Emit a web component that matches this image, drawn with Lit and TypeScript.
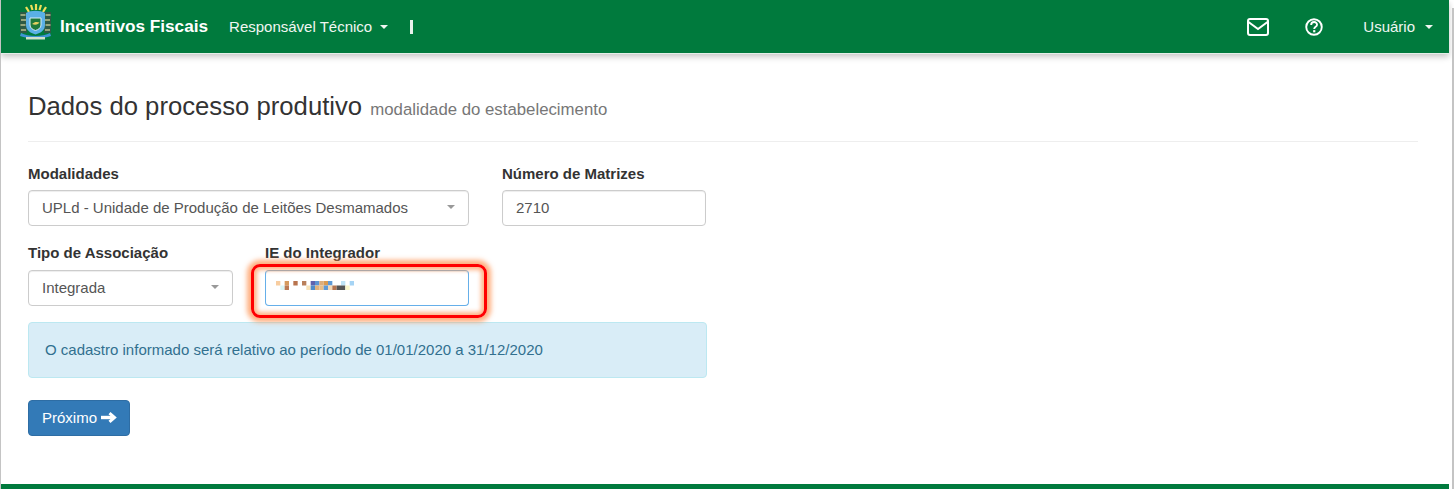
import { LitElement, html, css, svg } from "lit";
import { customElement } from "lit/decorators.js";

const mosaic: [number, number, string][] = [
  [0, 0, "#f8cda0"], [2, 0, "#d69a5e"], [4, 0, "#b9744e"], [6, 0, "#b97f5a"], [8, 0, "#5f62ad"],
  [9, 0, "#5c93d2"], [10, 0, "#dcae7c"], [11, 0, "#d99a52"], [12, 0, "#5e9ad6"], [15, 0, "#bfe3f5"],
  [17, 0, "#a6d4f5"], [1, 1, "#d9f5f5"], [2, 1, "#bb7a55"], [7, 1, "#f8e2b8"], [8, 1, "#4f8cc9"],
  [9, 1, "#e0b27c"], [10, 1, "#e8bd88"], [11, 1, "#5e9ad6"], [12, 1, "#f5d8b5"], [13, 1, "#b4744f"],
  [14, 1, "#555555"], [15, 1, "#555555"], [16, 1, "#f8f5c8"],
];

@customElement("app-root")
export class AppRoot extends LitElement {
  static styles = css`
    :host {
      display: block;
      height: 489px;
      width: 1454px;
      box-sizing: border-box;
      position: relative;
      overflow: hidden;
      background: #fff;
      font-family: "Liberation Sans", Arial, sans-serif;
      font-size: 15px;
      color: #333;
      border-left: 1px solid #c4c4c4;
    }
    .strip {
      position: absolute;
      right: 0;
      top: 8px;
      bottom: 0;
      width: 2px;
      background: #c4c4c4;
    }
    .page {
      width: 1448px;
      height: 489px;
      display: flex;
      flex-direction: column;
    }
    nav {
      height: 53px;
      flex: none;
      background: #007a3d;
      border-bottom: 1px solid #e4eee8;
      box-shadow: 0 3px 6px rgba(0, 0, 0, 0.22);
      display: flex;
      align-items: center;
      color: #fff;
      box-sizing: content-box;
    }
    .logo {
      margin-left: 17px;
      margin-bottom: 10px;
      width: 35px;
      height: 37px;
      flex: none;
    }
    .brand {
      margin-left: 7px;
      font-size: 17.2px;
      font-weight: 700;
    }
    .menu {
      margin-left: 21px;
      font-size: 15px;
      display: flex;
      align-items: center;
      color: #f0f6f2;
    }
    .caret {
      display: inline-block;
      width: 0;
      height: 0;
      border-left: 4px solid transparent;
      border-right: 4px solid transparent;
      border-top: 4px solid currentColor;
      margin-left: 8px;
    }
    .bar {
      margin-left: 22px;
      width: 3px;
      height: 14px;
      background: #e8f2ec;
    }
    .spacer { flex: 1; }
    .icon { flex: none; display: block; }
    .mail { margin-right: 36px; }
    .help { margin-right: 40px; }
    .menu.user { margin-left: 0; margin-right: 16px; }
    .menu.user .caret { margin-left: 10px; }
    main {
      flex: 1;
      padding: 36px 31px 0 27px;
      display: flex;
      flex-direction: column;
    }
    h1 {
      margin: 0;
      font-size: 25.7px;
      font-weight: 400;
      line-height: 32px;
      padding-bottom: 15px;
      border-bottom: 1px solid #eee;
      color: #333;
    }
    h1 small {
      font-size: 16.8px;
      color: #777;
      margin-left: 1px;
    }
    .row { display: flex; gap: 32px; }
    .row.first { margin-top: 22px; gap: 33px; }
    .row.second { margin-top: 17px; }
    .row.second label { margin-bottom: 7px; }
    .field { display: flex; flex-direction: column; }
    label {
      font-weight: 700;
      line-height: 20px;
      margin-bottom: 6px;
      color: #333;
    }
    .w441 { width: 441px; }
    .w204 { width: 204px; }
    .w205 { width: 205px; }
    .ctl {
      height: 36px;
      box-sizing: border-box;
      border: 1px solid #ccc;
      border-radius: 4px;
      padding: 0 13px 2px;
      display: flex;
      align-items: center;
      justify-content: space-between;
      color: #555;
      background: #fff;
      box-shadow: inset 0 1px 1px rgba(0, 0, 0, 0.075);
    }
    .ctl .caret { color: #999; margin: 0; }
    .ctl.focus {
      border-color: #66afe9;
      border-top-color: #8fb0c8;
      justify-content: flex-start;
      padding-left: 10px;
      position: relative;
    }
    .mosaic { margin-top: -4px; display: block; }
    .highlight {
      position: absolute;
      left: -15px;
      top: -7px;
      width: 236px;
      height: 54px;
      box-sizing: border-box;
      border: 3px solid #f00;
      border-radius: 9px;
      box-shadow: 0 0 5px 4px rgba(255, 140, 70, 0.7), inset 0 0 4px 3px rgba(255, 140, 70, 0.65);
      pointer-events: none;
    }
    .alert {
      margin-top: 16px;
      width: 679px;
      height: 56px;
      box-sizing: border-box;
      background: #d9edf7;
      border: 1px solid #bce8f1;
      border-radius: 4px;
      color: #31708f;
      padding: 0 16px 2px;
      display: flex;
      align-items: center;
    }
    button {
      margin-top: 22px;
      align-self: flex-start;
      width: 102px;
      height: 36px;
      box-sizing: border-box;
      background: #337ab7;
      border: 1px solid #2e6da4;
      border-radius: 4px;
      color: #fff;
      font: inherit;
      padding: 0 0 2px 13px;
      display: flex;
      align-items: center;
      gap: 4px;
    }
    .foot {
      height: 5px;
      background: #007a3d;
      margin-bottom: 0;
      flex: none;
    }
  `;

  render() {
    return html`
      <div class="strip"></div>
      <div class="page">
        <nav>
          <svg class="logo" viewBox="0 0 35 37" aria-hidden="true">
            <g stroke="#efe05a" stroke-width="2.200">
              <path d="M11 9 8 4M14.500 7l-1.500-5M18 7V1M21.500 7 23 2M25 9l3-5" />
            </g>
            <path d="M2 9h7v21H2zM26 9h7v21h-7z" fill="#2e5a44" />
            <path d="M2.500 12h5M3 17h5M2.500 22h5M3 27h5M27.500 12h5M27 17h5M27.500 22h5M27 27h5" stroke="#b9c08e" stroke-width="1.500" />
            <path d="M8 10c5-3 14-3 19 0v12c0 5-4 8-9.500 9.500C12 30 8 27 8 22z" fill="#5ab0e6" />
            <path d="M12 15h11v7c0 3-2.500 4.500-5.500 5.500-3-1-5.500-2.500-5.500-5.500z" fill="#1f7a3c" stroke="#d6ecf8" />
            <path d="M14 21c2.500-2.500 5-2.500 7.500-1.500-1 1.800-4 3-7.500 1.500z" fill="#e6cf60" />
            <path d="M3 30c7 4 22 4 29 0l1 3c-8 3-23 3-31 0z" fill="#3f94d4" />
            <path d="M8 34h19v2.500H8z" fill="#cfe0cc" />
          </svg>
          <span class="brand">Incentivos Fiscais</span>
          <span class="menu">Responsável Técnico<span class="caret"></span></span>
          <span class="bar"></span>
          <span class="spacer"></span>
          <svg class="icon mail" width="22" height="18" viewBox="0 0 22 18" fill="none" stroke="#fff" stroke-width="2" aria-hidden="true">
            <rect x="1" y="1" width="20" height="16" rx="2" />
            <path d="M1.500 4 11 11 20.500 4" />
          </svg>
          <svg class="icon help" width="18" height="18" viewBox="0 0 19 19" aria-hidden="true">
            <circle cx="9.500" cy="9.500" r="8.200" fill="none" stroke="#fff" stroke-width="2" />
            <path d="M6.500 7.300c0-4 6.200-4 6.200-.300 0 2.300-3 2.300-3 4.500" fill="none" stroke="#fff" stroke-width="2" />
            <rect x="8.600" y="12.800" width="2.300" height="2.300" fill="#fff" />
          </svg>
          <span class="menu user">Usuário<span class="caret"></span></span>
        </nav>
        <main>
          <h1>Dados do processo produtivo <small>modalidade do estabelecimento</small></h1>
          <div class="row first">
            <div class="field w441">
              <label>Modalidades</label>
              <div class="ctl"><span>UPLd - Unidade de Produção de Leitões Desmamados</span><span class="caret"></span></div>
            </div>
            <div class="field w204">
              <label>Número de Matrizes</label>
              <div class="ctl"><span>2710</span></div>
            </div>
          </div>
          <div class="row second">
            <div class="field w205">
              <label>Tipo de Associação</label>
              <div class="ctl"><span>Integrada</span><span class="caret"></span></div>
            </div>
            <div class="field w204">
              <label>IE do Integrador</label>
              <div class="ctl focus">
                <svg class="mosaic" width="78" height="9" viewBox="0 0 18 2" preserveAspectRatio="none" aria-hidden="true">
                  ${mosaic.map(([x, y, c]) => svg`<rect x=${x} y=${y} width="1" height="1" fill=${c} />`)}
                </svg>
                <div class="highlight"></div>
              </div>
            </div>
          </div>
          <div class="alert">O cadastro informado será relativo ao período de 01/01/2020 a 31/12/2020</div>
          <button>Próximo
            <svg width="16" height="11" viewBox="0 0 16 11" fill="none" stroke="#fff" aria-hidden="true">
              <path d="M0 5.500h13" stroke-width="3.400" />
              <path d="M8.500 1.200 13.500 5.500 8.500 9.800" stroke-width="3" />
            </svg>
          </button>
        </main>
        <div class="foot"></div>
      </div>
    `;
  }
}
